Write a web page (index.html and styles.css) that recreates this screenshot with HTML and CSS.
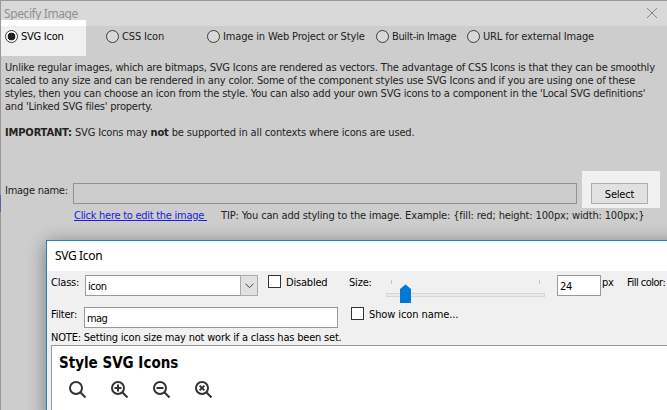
FILE: index.html
```html
<!DOCTYPE html>
<html lang="en">
<head>
<meta charset="utf-8">
<title>Specify Image</title>
<link rel="stylesheet" href="styles.css">
</head>
<body>
<main class="window">
  <header class="titlebar">
    <span class="caption">Specify Image</span>
    <svg class="close" width="12" height="12" viewBox="0 0 12 12"><path d="M1 1 11 11M11 1 1 11"/></svg>
  </header>
  <div class="options">
    <label class="option o1"><i class="radio checked"></i><span class="t">SVG Icon</span></label>
    <label class="option o2"><i class="radio"></i><span class="t">CSS Icon</span></label>
    <label class="option o3"><i class="radio"></i><span class="t">Image in Web Project or Style</span></label>
    <label class="option o4"><i class="radio"></i><span class="t">Built-in Image</span></label>
    <label class="option o5"><i class="radio"></i><span class="t">URL for external Image</span></label>
  </div>
  <div class="description">
    <div><span class="l1">Unlike regular images, which are bitmaps, SVG Icons are rendered as vectors. The advantage of CSS Icons is that they can be smoothly</span></div>
    <div><span class="l2">scaled to any size and can be rendered in any color. Some of the component styles use SVG Icons and if you are using one of these</span></div>
    <div><span class="l3">styles, then you can choose an icon from the style. You can also add your own SVG icons to a component in the 'Local SVG definitions'</span></div>
    <div><span class="l4">and 'Linked SVG files' property.</span></div>
    <div class="important"><span class="l5"><b>IMPORTANT:</b> SVG Icons may <b>not</b> be supported in all contexts where icons are used.</span></div>
  </div>
  <div class="name-row">
    <span class="name-label">Image name:</span>
    <div class="name-field"></div>
    <div class="select-area"><button class="select">Select</button></div>
  </div>
  <div class="tip-row">
    <a class="edit" href="#">Click here to edit the image&nbsp;</a>
    <span class="tip">TIP: You can add styling to the image. Example: {fill: red; height: 100px; width: 100px;}</span>
  </div>
</main>
<section class="dialog">
  <header class="dialog-title"><span>SVG Icon</span></header>
  <div class="panel">
    <div class="row">
      <span class="label class-label">Class:</span>
      <div class="combo"><span>icon</span><div class="arrow"><svg width="9" height="6" viewBox="0 0 9 6"><path d="M.5 .7 4.5 4.7 8.5 .7"/></svg></div></div>
      <i class="check c1"></i><span class="label disabled-label">Disabled</span>
      <span class="label size-label">Size:</span>
      <svg class="slider" width="161" height="28" viewBox="0 0 161 28">
        <path class="tick" d="M5.5 5v4M153.5 5v4"/>
        <rect class="track" x=".5" y="18.500" width="158" height="3"/>
        <path class="thumb" d="M14 28V14L19.500 9.500 25 14V28Z"/>
      </svg>
      <div class="size-field">24</div><span class="label px">px</span><span class="label fill">Fill color:</span>
    </div>
    <div class="row filter-row">
      <span class="label filter-label">Filter:</span>
      <div class="filter">mag</div>
      <i class="check c2"></i><span class="label show-label">Show icon name...</span>
    </div>
    <div class="note"><span>NOTE: Setting icon size may not work if a class has been set.</span></div>
    <div class="list">
      <h2><span>Style SVG Icons</span></h2>
      <div class="icons">
        <svg width="18" height="18" viewBox="0 0 18 18"><circle cx="7" cy="7" r="6"/><path d="M11.300 11.300 16.500 16.500"/></svg>
        <svg width="18" height="18" viewBox="0 0 18 18"><circle cx="7" cy="7" r="6"/><path d="M11.300 11.300 16.500 16.500M3.500 7h7M7 3.500v7"/></svg>
        <svg width="18" height="18" viewBox="0 0 18 18"><circle cx="7" cy="7" r="6"/><path d="M11.300 11.300 16.500 16.500M3.500 7h7"/></svg>
        <svg width="18" height="18" viewBox="0 0 18 18"><circle cx="7" cy="7" r="6"/><path d="M11.300 11.300 16.500 16.500M4.600 4.600l4.800 4.800M9.400 4.600 4.600 9.400"/></svg>
      </div>
    </div>
  </div>
</section>
</body>
</html>
```
FILE: styles.css
```css
* { box-sizing: border-box; }
body {
  margin: 0;
  width: 667px;
  height: 410px;
  overflow: hidden;
  position: relative;
  font: 11px/13px "DejaVu Sans Condensed", "DejaVu Sans", sans-serif;
  color: #222;
  white-space: nowrap;
}
svg { display: block; flex: none; fill: none; }
.window {
  height: 410px;
  background: #cdcdcd;
  border-top: 1px solid #999;
  border-left: 1px solid;
  border-image: linear-gradient(#999 195px, #5566a8 195px, #5566a8 211px, #999 211px) 1;
}
.titlebar {
  height: 25px;
  background: #d9d9d9;
  display: flex;
  justify-content: space-between;
  padding: 6px 9px 0 3px;
}
.caption { font: 12px/14px "Noto Sans", sans-serif; letter-spacing: -.4px; color: #919191; }
.close { stroke: #858585; }
.options { display: flex; height: 36px; margin-top: -6px; }
.option { display: flex; align-items: flex-start; gap: 3px; padding: 10px 0 0 4px; height: 36px; flex: none; }
.option .t { line-height: 14px; letter-spacing: -.15px; }
.o1 { width: 85px; background: linear-gradient(#fff 6px, #f0f0f0 6px); color: #000; }
.o1 .t { letter-spacing: -.25px; }
.o2 { width: 101px; padding-left: 20px; }
.o3 { width: 168px; padding-left: 20px; }
.o4 { width: 91px; padding-left: 21px; }
.o4 .t { letter-spacing: -.35px; }
.o5 { padding-left: 21px; }
.radio { width: 13px; height: 13px; border: 1px solid #3c3c3c; border-radius: 50%; background: #d9d9d9; flex: none; }
.radio.checked { background: radial-gradient(circle, #222 3.600px, #fff 4.200px); }
.description { padding: 5px 0 0 4px; height: 109px; }
.l1 { letter-spacing: -.17px; }
.l2 { letter-spacing: -.17px; }
.l3 { letter-spacing: -.195px; }
.l4 { letter-spacing: -.2px; }
.l5 { letter-spacing: -.14px; }
.important { margin-top: 13px; }
.name-row { display: flex; height: 37px; margin-top: 6px; padding-left: 4px; }
.name-label { width: 68px; padding-top: 13px; letter-spacing: -.25px; }
.name-field { width: 504px; height: 21px; margin-top: 12px; border: 1px solid #929292; }
.select-area { width: 78px; height: 37px; margin-left: 5px; padding: 12px 0 0 9px; background: #f0f0f0; }
.select { display: block; width: 57px; height: 21px; padding: 1px 0 0; border: 1px solid #adadad; background: #e1e1e1; color: #000; font: inherit; letter-spacing: -.2px; }
.tip-row { display: flex; padding: 1px 0 0 73px; }
.tip { letter-spacing: -.146px; }
.edit { color: #1a1ae0; width: 147px; text-decoration: underline; letter-spacing: -.27px; }
.dialog {
  position: absolute;
  left: 46px;
  top: 240px;
  width: 640px;
  height: 180px;
  border: 1px solid #1883d7;
  background: #f0f0f0;
  color: #000;
  box-shadow: 0 3px 17px rgba(0, 0, 0, .42);
}
.dialog-title { height: 30px; background: #fff; padding: 7px 0 0 8px; font: 12px/16px "Noto Sans", sans-serif; letter-spacing: -.35px; }
.panel { padding: 4px 0 0 4px; }
.row { display: flex; height: 32px; }
.label { line-height: 15px; flex: none; letter-spacing: -.2px; }
.class-label { width: 34px; }
.combo { display: flex; justify-content: space-between; width: 173px; height: 21px; border: 1px solid #999; background: #fff; padding-left: 2px; line-height: 21px; letter-spacing: -.5px; }
.arrow { width: 18px; border: 1px solid #aaa; background: #e1e1e1; display: flex; align-items: center; justify-content: center; margin: -1px; height: 21px; }
.arrow svg { stroke: #444; }
.check { width: 13px; height: 13px; border: 1px solid #333; background: #fff; flex: none; }
.c1 { margin-left: 10px; }
.c2 { margin-left: 13px; }
.disabled-label { margin-left: 5px; width: 63px; }
.size-label { width: 37px; }
.slider { overflow: visible; }
.tick { stroke: #c4c4c4; }
.track { fill: #e7eaea; stroke: #d6d6d6; }
.thumb { fill: #0078d7; }
.size-field { width: 44px; height: 21px; margin-left: 10px; border: 1px solid #999; background: #fff; padding-left: 2px; line-height: 21px; letter-spacing: -.4px; }
.px { margin-left: 1px; width: 25px; }
.fill { letter-spacing: -.5px; }
.filter-label { width: 33px; }
.filter { width: 254px; height: 21px; border: 1px solid #999; background: #fff; padding-left: 2px; line-height: 21px; letter-spacing: -.6px; }
.show-label { margin-left: 5px; letter-spacing: -.1px; }
.note { height: 13px; margin-top: -8px; letter-spacing: -.2px; }
.note + .list { margin-top: 1px; }
.list { height: 80px; border: 1px solid #999; background: #fff; padding: 8px 0 0 7px; }
h2 { margin: 0; font: bold 15px/18px "DejaVu Sans Condensed", "DejaVu Sans", sans-serif; }
.icons { display: flex; gap: 24px; padding: 9px 0 0 10px; }
.icons svg { stroke: #333; stroke-width: 2; }
```
